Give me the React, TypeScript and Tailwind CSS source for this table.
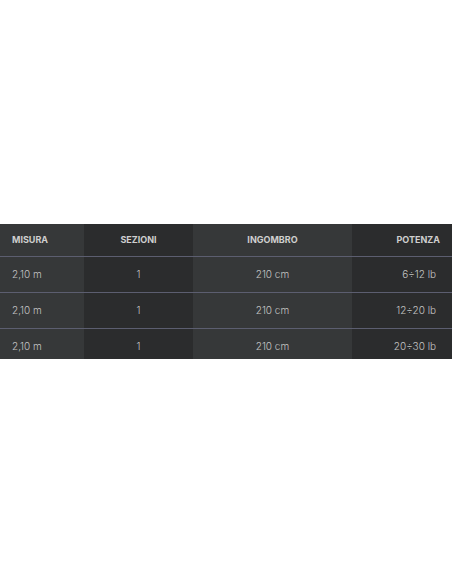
const rows = [
  ["2,10 m", "1", "210 cm", "6÷12 lb"],
  ["2,10 m", "1", "210 cm", "12÷20 lb"],
  ["2,10 m", "1", "210 cm", "20÷30 lb"],
];

const cols = [
  "bg-[#363839] text-left pl-3",
  "bg-[#2b2c2d] text-center",
  "bg-[#363839] text-center",
  "bg-[#2b2c2d] text-right",
];

export default function App() {
  return (
    <div className="w-[452px] h-[584px] bg-white pt-[224px]" style={{ fontFamily: "Inter, 'Noto Sans', sans-serif" }}>
      <table className="w-full border-collapse table-fixed">
        <colgroup>
          <col className="w-[84px]" />
          <col className="w-[109px]" />
          <col className="w-[159px]" />
          <col className="w-[100px]" />
        </colgroup>
        <thead>
          <tr className="h-[32px] border-b border-[#5c5e70]">
            {["MISURA", "SEZIONI", "INGOMBRO", "POTENZA"].map((h, i) => (
              <th key={h} className={`${cols[i]} ${i === 3 ? "pr-3" : ""} text-[9px] font-bold text-[#cfcfcf] pb-[1px]`}>{h}</th>
            ))}
          </tr>
        </thead>
        <tbody>
          {rows.map((r, ri) => {
            const last = ri === rows.length - 1;
            return (
              <tr key={ri} className={last ? "h-[31px]" : "h-[36px] border-b border-[#5c5e70]"}>
                {r.map((c, i) => (
                  <td key={i} className={`${cols[i]} ${i === 3 ? "pr-4" : ""} ${last ? "pt-[5px]" : ""} text-[10px] font-light text-[#c4c4c4]`}>{c}</td>
                ))}
              </tr>
            );
          })}
        </tbody>
      </table>
    </div>
  );
}
